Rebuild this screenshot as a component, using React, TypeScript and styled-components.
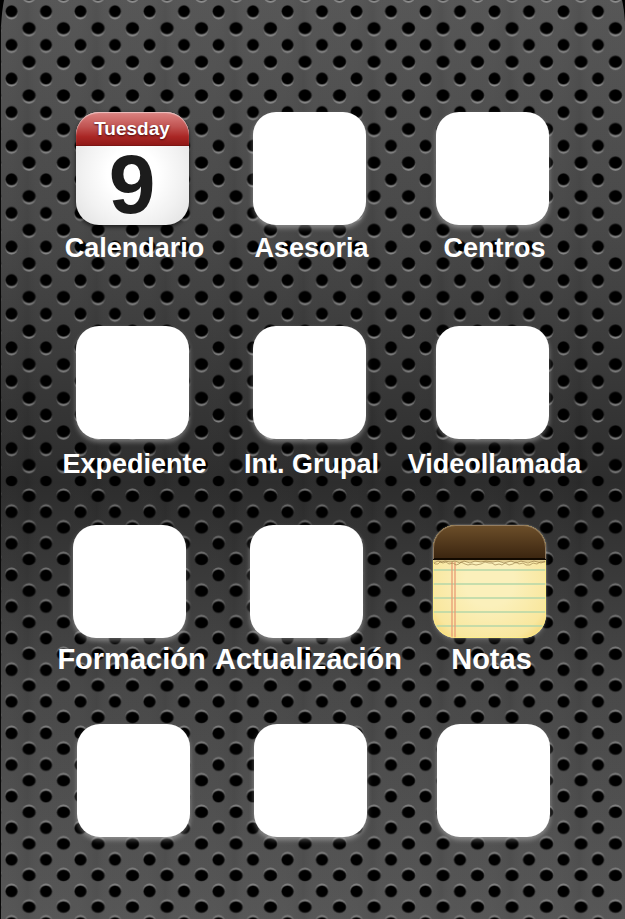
import React from "react";
import styled, { createGlobalStyle } from "styled-components";

const GlobalStyle = createGlobalStyle`
  *, *::before, *::after { box-sizing: border-box; }
  body {
    margin: 0;
    background: #3a3a3a;
    font-family: "Liberation Sans", Arial, Helvetica, sans-serif;
  }
`;

const Screen = styled.main`
  display: grid;
  grid-template: minmax(100vh, auto) / minmax(0, 1fr);
  overflow: hidden;
`;

const Wallpaper = styled.svg`
  grid-area: 1 / 1;
  width: 100%;
  height: 100%;
  min-height: 0;
  contain: size;
`;

const Apps = styled.div`
  grid-area: 1 / 1;
  z-index: 1;
  display: flex;
  flex-direction: column;
  padding: 112px 0 48px;
`;

const Row = styled.div<{ $left: number; $right: number; $after: number }>`
  display: grid;
  grid-template-columns: 176fr 178fr 188fr;
  padding: 0 ${(p) => p.$right}px 0 ${(p) => p.$left}px;
  margin-bottom: ${(p) => p.$after}px;
`;

const AppButton = styled.button<{ $gap: number }>`
  display: flex;
  flex-direction: column;
  align-items: center;
  gap: ${(p) => p.$gap}px;
  min-width: 0;
  padding: 0;
  border: 0;
  background: none;
  color: #fff;
  font: inherit;
  cursor: pointer;
`;

const Tile = styled.span`
  display: flex;
  flex-direction: column;
  width: 113px;
  height: 113px;
  border-radius: 23px;
  background: #fff;
  box-shadow: 0 3px 5px rgba(255, 255, 255, 0.35);
`;

const CalendarTile = styled(Tile)`
  background: radial-gradient(circle at 50% 55%, #fff 30%, #f1f1f1 60%, #dadada 100%);
  box-shadow: 0 2px 4px rgba(0, 0, 0, 0.6);
`;

const Weekday = styled.span`
  height: 34px;
  border-bottom: 1px solid #7c1513;
  border-radius: 23px 23px 0 0;
  background: linear-gradient(#dd8583, #c05351 45%, #a92624 75%, #901917);
  box-shadow: inset 0 1px 1px rgba(255, 255, 255, 0.5);
  font-size: 19px;
  font-weight: 700;
  line-height: 34px;
  text-align: center;
  text-shadow: 0 1px 2px rgba(50, 0, 0, 0.8);
`;

const Day = styled.span`
  color: #1c1c1c;
  font-size: 84px;
  font-weight: 700;
  line-height: 76px;
  text-align: center;
`;

const NotesTile = styled(Tile)`
  background: #faebaa;
  overflow: hidden;
  box-shadow: 0 0 2px rgba(255, 255, 255, 0.5), 0 3px 5px rgba(255, 255, 255, 0.15);
`;

const Label = styled.span<{ $size: number }>`
  padding-left: 5px;
  font-size: ${(p) => p.$size}px;
  font-weight: 700;
  line-height: 32px;
  white-space: nowrap;
`;

function PerforatedMetal() {
  return (
    <Wallpaper aria-hidden="true">
      <defs>
        <linearGradient id="steel" x1="0" y1="0" x2="0" y2="1">
          <stop offset="0" stopColor="#555" />
          <stop offset="0.25" stopColor="#474747" />
          <stop offset="0.525" stopColor="#2b2b2b" />
          <stop offset="0.75" stopColor="#474747" />
          <stop offset="1" stopColor="#555" />
        </linearGradient>
        <linearGradient id="sheen" gradientUnits="userSpaceOnUse" x1="0" y1="0" x2="69" y2="0" spreadMethod="repeat">
          <stop offset="0" stopColor="#fff" stopOpacity="0.01" />
          <stop offset="0.4" stopColor="#000" stopOpacity="0.04" />
          <stop offset="0.6" stopColor="#fff" stopOpacity="0.01" />
          <stop offset="1" stopColor="#fff" stopOpacity="0.01" />
        </linearGradient>
        <radialGradient id="hole">
          <stop offset="0.8" stopColor="#000" />
          <stop offset="1" stopColor="#000" stopOpacity="0.35" />
        </radialGradient>
        <linearGradient id="rimLow" x1="0" y1="0" x2="0" y2="1">
          <stop offset="0.4" stopColor="#aaa" stopOpacity="0" />
          <stop offset="1" stopColor="#b0b0b0" stopOpacity="0.7" />
        </linearGradient>
        <linearGradient id="rimHigh" x1="0" y1="0" x2="0" y2="1">
          <stop offset="0" stopColor="#b0b0b0" stopOpacity="0.55" />
          <stop offset="0.6" stopColor="#aaa" stopOpacity="0" />
        </linearGradient>
        <pattern id="upper" patternUnits="userSpaceOnUse" x="2" y="3" width="34.5" height="33.6">
          <ellipse cx="9.5" cy="9.5" rx="6.6" ry="6.9" fill="url(#rimLow)" />
          <ellipse cx="9.5" cy="8.3" rx="6.3" ry="6.3" fill="url(#hole)" />
          <ellipse cx="27" cy="26.4" rx="7.2" ry="6.9" fill="url(#rimLow)" />
          <ellipse cx="27" cy="25.2" rx="7" ry="6.4" fill="url(#hole)" />
        </pattern>
        <pattern id="middle" patternUnits="userSpaceOnUse" x="2" y="474" width="34.5" height="14">
          <ellipse cx="9.5" cy="7" rx="6.2" ry="5.6" fill="url(#hole)" />
        </pattern>
        <pattern id="lower" patternUnits="userSpaceOnUse" x="2" y="488" width="34.5" height="31.6">
          <ellipse cx="27" cy="7.2" rx="7.2" ry="6.6" fill="url(#rimHigh)" />
          <ellipse cx="27" cy="8.3" rx="7" ry="6.1" fill="url(#hole)" />
          <ellipse cx="9.5" cy="23" rx="6.8" ry="6.7" fill="url(#rimHigh)" />
          <ellipse cx="9.5" cy="24.2" rx="6.4" ry="6.2" fill="url(#hole)" />
        </pattern>
      </defs>
      <rect width="100%" height="100%" fill="url(#steel)" />
      <rect width="100%" height="100%" fill="url(#sheen)" />
      <rect width="100%" height="474" fill="url(#upper)" />
      <rect y="474" width="100%" height="14" fill="url(#middle)" />
      <rect y="488" width="100%" height="100%" fill="url(#lower)" />
      <rect width="1" height="100%" fill="#080808" />
      <path d="M0 0H4Q2 10 1 26H0Z" fill="#000" />
      <svg x="100%" overflow="visible">
        <path d="M0 0H-3Q-1 8 0 22Z" fill="#000" />
      </svg>
    </Wallpaper>
  );
}

function NotesArt() {
  return (
    <svg viewBox="0 0 113 113" width="113" height="113" aria-hidden="true">
      <defs>
        <linearGradient id="leather" x1="0" y1="0" x2="0" y2="1">
          <stop offset="0" stopColor="#6d4f2a" />
          <stop offset="1" stopColor="#3a240f" />
        </linearGradient>
        <radialGradient id="paper" cx="0.5" cy="0.5" r="0.72">
          <stop offset="0.3" stopColor="#fbf0bb" />
          <stop offset="0.75" stopColor="#f9e79e" />
          <stop offset="1" stopColor="#f5cd62" />
        </radialGradient>
      </defs>
      <rect width="113" height="113" fill="url(#paper)" />
      <path d="M0 45H113M0 59H113M0 73H113M0 87H113M0 101H113" stroke="#b5d6a8" strokeWidth="1.4" />
      <path d="M19 36V113M22 36V113" stroke="#e99b74" strokeWidth="1.3" />
      <rect y="34" width="113" height="3" fill="#e2cf92" />
      <path
        d="M0 37L2 39L5 39L7 37L10 38L13 37L16 39L20 38L23 40L26 39L28 37L32 39L35 40L39 39L43 40L48 39L52 37L56 38L59 38L62 40L66 39L69 40L72 38L76 40L80 39L83 37L86 39L90 38L93 40L97 40L100 38L104 39L107 37L113 37M1 38L5 36L9 37L12 36L17 37L22 36L27 38L31 36L37 38L42 36L48 37L53 36L60 37L65 36L71 38L78 36L83 38L88 36L95 38L101 36L108 38L113 36"
        fill="none"
        stroke="#8e7340"
        strokeOpacity="0.75"
        strokeWidth="0.8"
        strokeLinejoin="round"
      />
      <rect width="113" height="34" fill="url(#leather)" />
      <rect y="33" width="113" height="2" fill="#120900" />
      <path d="M0.5 35V90A22.5 22.5 0 0 0 23 112.5H90A22.5 22.5 0 0 0 112.5 90V35" fill="none" stroke="#fff27e" strokeOpacity="0.7" />
      <path d="M0.5 34V23A22.5 22.5 0 0 1 23 0.5H90A22.5 22.5 0 0 1 112.5 23V34" fill="none" stroke="#a08b70" strokeOpacity="0.8" />
    </svg>
  );
}

type Kind = "blank" | "calendar" | "notes";
type Entry = { id: string; label?: string; kind?: Kind };
type RowData = { left: number; right: number; after: number; gap: number; size: number; apps: Entry[] };

const rows: RowData[] = [
  {
    left: 44, right: 39, after: 62, gap: 7, size: 27,
    apps: [
      { id: "calendar", label: "Calendario", kind: "calendar" },
      { id: "advice", label: "Asesoria" },
      { id: "centers", label: "Centros" },
    ],
  },
  {
    left: 44, right: 39, after: 45, gap: 9, size: 27,
    apps: [
      { id: "records", label: "Expediente" },
      { id: "group", label: "Int. Grupal" },
      { id: "video", label: "Videollamada" },
    ],
  },
  {
    left: 41, right: 42, after: 49, gap: 5, size: 29,
    apps: [
      { id: "training", label: "Formación" },
      { id: "update", label: "Actualización" },
      { id: "notes", label: "Notas", kind: "notes" },
    ],
  },
  {
    left: 45, right: 38, after: 0, gap: 0, size: 27,
    apps: [{ id: "free-1" }, { id: "free-2" }, { id: "free-3" }],
  },
];

function AppIcon({ kind = "blank" }: { kind?: Kind }) {
  if (kind === "calendar") {
    return (
      <CalendarTile>
        <Weekday>Tuesday</Weekday>
        <Day>9</Day>
      </CalendarTile>
    );
  }
  if (kind === "notes") {
    return (
      <NotesTile>
        <NotesArt />
      </NotesTile>
    );
  }
  return <Tile />;
}

export default function App() {
  return (
    <>
      <GlobalStyle />
      <Screen>
        <PerforatedMetal />
        <Apps>
          {rows.map((row) => (
            <Row key={row.apps[0].id} $left={row.left} $right={row.right} $after={row.after}>
              {row.apps.map((app) => (
                <AppButton key={app.id} type="button" $gap={row.gap} aria-label={app.label ? undefined : "App"}>
                  <AppIcon kind={app.kind} />
                  {app.label && <Label $size={row.size}>{app.label}</Label>}
                </AppButton>
              ))}
            </Row>
          ))}
        </Apps>
      </Screen>
    </>
  );
}
